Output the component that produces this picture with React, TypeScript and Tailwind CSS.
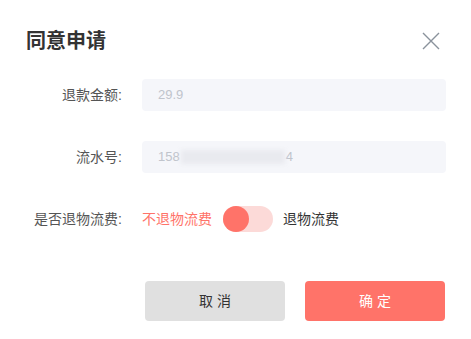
import { useState } from 'react';

const App = () => {
  const [refundShipping, setRefundShipping] = useState(false);

  return (
    <div className="w-[471px] h-[339px] bg-white font-['Liberation_Sans','Noto_Sans_CJK_SC',sans-serif] text-[#333]">
      {/* Header */}
      <div className="flex items-center justify-between pl-[26px] pr-[31px] pt-[28px]">
        <h1 className="text-[20px] leading-[26px] font-bold text-[#333]">同意申请</h1>
        <button className="w-[18px] h-[18px] text-[#8a929c]">
          <svg viewBox="0 0 18 18" className="w-[18px] h-[18px]" fill="none" stroke="currentColor" strokeWidth={1.4}>
            <path d="M1 1l16 16M17 1L1 17" />
          </svg>
        </button>
      </div>

      {/* Form */}
      <div className="mt-[25px] flex flex-col">
        <div className="flex items-center h-[32px]">
          <label className="w-[122px] text-right text-[14px] text-[#555]">退款金额:</label>
          <div className="ml-[20px] w-[304px] h-[32px] rounded-[4px] bg-[#f5f6fa] flex items-center pl-[16px] text-[13px] text-[#c0c4cc]">
            29.9
          </div>
        </div>

        <div className="flex items-center h-[32px] mt-[30px]">
          <label className="w-[122px] text-right text-[14px] text-[#555]">流水号:</label>
          <div className="ml-[20px] w-[304px] h-[32px] rounded-[4px] bg-[#f5f6fa] flex items-center pl-[16px] text-[13px] text-[#c0c4cc]">
            158
            <span className="relative inline-block w-[106px] h-[16px]">
              <span className="absolute inset-[1px] bg-[#e9eaef] blur-[2px]" />
            </span>
            4
          </div>
        </div>

        <div className="flex items-center h-[26px] mt-[33px]">
          <label className="w-[122px] text-right text-[14px] text-[#555]">是否退物流费:</label>
          <span className={`ml-[20px] text-[14px] ${refundShipping ? 'text-[#333]' : 'text-[#ff7369]'}`}>不退物流费</span>
          <button
            onClick={() => setRefundShipping(!refundShipping)}
            className="ml-[11px] relative w-[50px] h-[26px] rounded-full bg-[#fcdad8]"
          >
            <span
              className={`absolute top-0 w-[26px] h-[26px] rounded-full bg-[#ff7369] ${refundShipping ? 'right-0' : 'left-0'}`}
            />
          </button>
          <span className={`ml-[10px] text-[14px] ${refundShipping ? 'text-[#ff7369]' : 'text-[#333]'}`}>退物流费</span>
        </div>
      </div>

      {/* Footer */}
      <div className="flex justify-end gap-[20px] pr-[26px] mt-[49px]">
        <button className="w-[140px] h-[40px] rounded-[4px] bg-[#e0e0e0] text-[14px] text-[#333]">
          取 消
        </button>
        <button className="w-[140px] h-[40px] rounded-[4px] bg-[#ff7369] text-[14px] text-white">
          确 定
        </button>
      </div>
    </div>
  );
};

export default App;
